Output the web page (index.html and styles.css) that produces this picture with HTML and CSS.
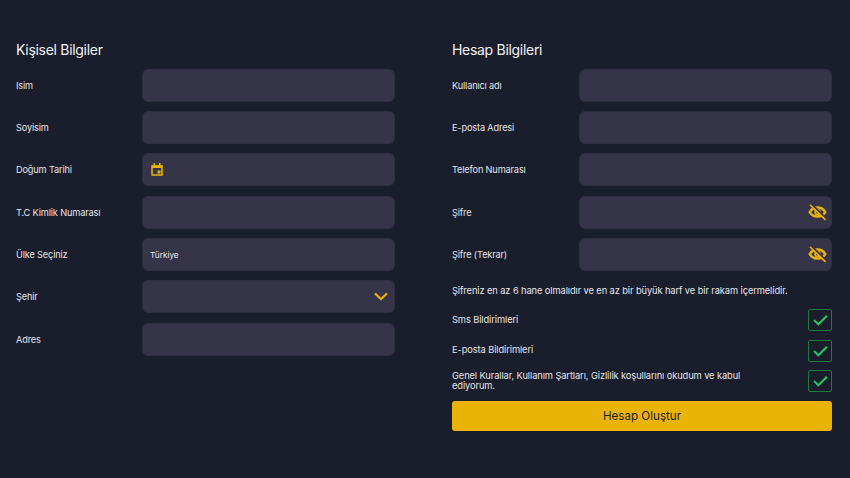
FILE: index.html
```html
<!DOCTYPE html>
<html lang="tr">
<head>
<meta charset="utf-8">
<title>Hesap Oluştur</title>
<link rel="stylesheet" href="styles.css">
</head>
<body>
<main class="page">
  <section class="col">
    <h2 class="title">Kişisel Bilgiler</h2>
    <div class="rows">
      <div class="row"><label class="lbl">Isim</label><div class="field"></div></div>
      <div class="row"><label class="lbl">Soyisim</label><div class="field"></div></div>
      <div class="row"><label class="lbl">Doğum Tarihi</label><div class="field field-date">
        <svg viewBox="0 0 12 13" width="12" height="13"><path fill="none" stroke="#eab308" stroke-width="1.500" d="M1 3h10v9H1z"/><path fill="#eab308" d="M1 2.500h10v2.500H1zM2.500 0h1.600v2.500H2.500zM7.900 0h1.600v2.500H7.900zM6.500 7.500h3v3h-3z"/></svg>
      </div></div>
      <div class="row"><label class="lbl">T.C Kimlik Numarası</label><div class="field"></div></div>
      <div class="row"><label class="lbl">Ülke Seçiniz</label><div class="field field-text">Türkiye</div></div>
      <div class="row"><label class="lbl">Şehir</label><div class="field field-end">
        <svg viewBox="0 0 14 9" width="14" height="9"><path fill="none" stroke="#eab308" stroke-width="2.200" d="M1 1.500l6 5.500 6-5.500"/></svg>
      </div></div>
      <div class="row"><label class="lbl">Adres</label><div class="field"></div></div>
    </div>
  </section>
  <section class="col">
    <h2 class="title">Hesap Bilgileri</h2>
    <div class="rows rows-right">
      <div class="row"><label class="lbl">Kullanıcı adı</label><div class="field"></div></div>
      <div class="row"><label class="lbl">E-posta Adresi</label><div class="field"></div></div>
      <div class="row"><label class="lbl">Telefon Numarası</label><div class="field"></div></div>
      <div class="row"><label class="lbl">Şifre</label><div class="field field-eye">
        <svg viewBox="0 0 20 18" width="19" height="17"><path fill="none" stroke="#eab308" stroke-width="2.600" d="M1.800 8.500C3.800 5.200 6.500 3.800 10 3.800s6.200 1.400 8.200 4.700c-2 3.400-4.700 4.700-8.200 4.700s-6.200-1.300-8.200-4.700z"/><circle cx="10" cy="8.500" r="2.500" fill="none" stroke="#eab308" stroke-width="1.800"/><path stroke="#363449" stroke-width="2.400" d="M3.500 .2l15.500 15.300"/><path stroke="#eab308" stroke-width="1.700" d="M2 .8l16.500 16"/></svg>
      </div></div>
      <div class="row"><label class="lbl">Şifre (Tekrar)</label><div class="field field-eye">
        <svg viewBox="0 0 20 18" width="19" height="17"><path fill="none" stroke="#eab308" stroke-width="2.600" d="M1.800 8.500C3.800 5.200 6.500 3.800 10 3.800s6.200 1.400 8.200 4.700c-2 3.400-4.700 4.700-8.200 4.700s-6.200-1.300-8.200-4.700z"/><circle cx="10" cy="8.500" r="2.500" fill="none" stroke="#eab308" stroke-width="1.800"/><path stroke="#363449" stroke-width="2.400" d="M3.500 .2l15.500 15.300"/><path stroke="#eab308" stroke-width="1.700" d="M2 .8l16.500 16"/></svg>
      </div></div>
    </div>
    <p class="hint">Şifreniz en az 6 hane olmalıdır ve en az bir büyük harf ve bir rakam içermelidir.</p>
    <div class="checks">
      <div class="check-row"><span class="check-lbl">Sms Bildirimleri</span><span class="box"><svg viewBox="0 0 14 11" width="15" height="12"><path fill="none" stroke="#22c55e" stroke-width="2" d="M1 5.500l4 4 8-8"/></svg></span></div>
      <div class="check-row"><span class="check-lbl">E-posta Bildirimleri</span><span class="box"><svg viewBox="0 0 14 11" width="15" height="12"><path fill="none" stroke="#22c55e" stroke-width="2" d="M1 5.500l4 4 8-8"/></svg></span></div>
      <div class="check-row"><span class="check-lbl check-long">Genel Kurallar, Kullanım Şartları, Gizlilik koşullarını okudum ve kabul ediyorum.</span><span class="box"><svg viewBox="0 0 14 11" width="15" height="12"><path fill="none" stroke="#22c55e" stroke-width="2" d="M1 5.500l4 4 8-8"/></svg></span></div>
    </div>
    <button class="submit" type="button">Hesap Oluştur</button>
  </section>
</main>
</body>
</html>
```
FILE: styles.css
```css
* { box-sizing: border-box; }
html, body { margin: 0; padding: 0; }
body {
  width: 850px;
  height: 478px;
  overflow: hidden;
  background: #1a1d2b;
  color: #e9e9ee;
  font-family: "Inter", "Liberation Sans", sans-serif;
}
.page {
  display: grid;
  grid-template-columns: 379px 380px;
  column-gap: 57px;
  padding: 41px 0 0 16px;
}
.title {
  margin: 0 0 9.500px;
  height: 18px;
  font-size: 14px;
  line-height: 18px;
  font-weight: 400;
  letter-spacing: -0.3px;
  color: #f1f1f4;
}
.rows { display: flex; flex-direction: column; gap: 9.400px; }
.row {
  display: grid;
  grid-template-columns: 126px 1fr;
  align-items: center;
}
.rows-right .row { grid-template-columns: 127px 1fr; }
.lbl { padding-top: 1px; font-size: 9.200px; line-height: 14px; letter-spacing: -0.15px; color: #e4e4ea; }
.field {
  height: 33px;
  background: #363449;
  border: 1px solid #302f42;
  border-radius: 6px;
  display: flex;
  align-items: center;
}
.field-text { padding-left: 7px; font-size: 8.200px; color: #e9e9ee; }
.field-date { padding-left: 8px; }
.field-end { justify-content: flex-end; padding-right: 6px; }
.field-eye { justify-content: flex-end; padding-right: 4px; }
.hint { margin: 13px 0 11px; font-size: 9.300px; line-height: 14px; letter-spacing: -0.1px; color: #e6e6ec; }
.checks { display: flex; flex-direction: column; gap: 8.500px; }
.check-row { display: flex; justify-content: space-between; align-items: center; min-height: 22px; }
.check-lbl { font-size: 9.300px; line-height: 10.500px; letter-spacing: -0.1px; color: #e4e4ea; }
.check-long { width: 310px; }
.box {
  width: 24px;
  height: 22px;
  border: 1px solid #1c7a3c;
  border-radius: 2px;
  display: flex;
  align-items: center;
  justify-content: center;
}
.submit {
  display: block;
  width: 100%;
  height: 30px;
  margin-top: 9px;
  padding: 0;
  border: 0;
  border-radius: 3px;
  background: #eab308;
  color: #1d1d22;
  font-family: inherit;
  font-size: 11.600px;
}
```
